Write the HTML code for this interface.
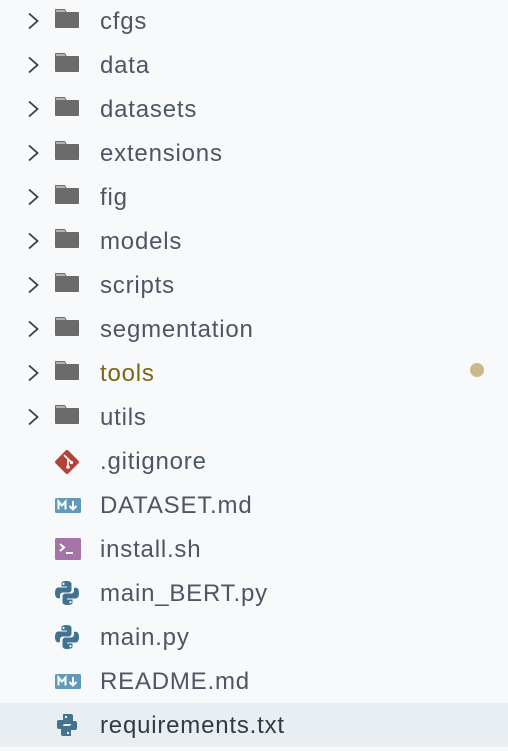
<!DOCTYPE html>
<html><head><meta charset="utf-8"><style>
html,body{margin:0;padding:0;width:508px;height:751px;background:#f8f9fb;overflow:hidden;font-family:"Liberation Sans",sans-serif;}
.row{position:absolute;left:0;width:508px;height:44px;}
.row .t{position:absolute;left:100px;top:1px;line-height:44px;font-size:24px;letter-spacing:0.8px;color:#4d5664;white-space:nowrap;}
.row svg{position:absolute;}
.sel{background:#e9eef3;}
</style></head><body>
<div id="c"></div>
<script>
var folders=["cfgs","data","datasets","extensions","fig","models","scripts","segmentation","tools","utils"];
var files=[[".gitignore","git"],["DATASET.md","md"],["install.sh","sh"],["main_BERT.py","py"],["main.py","py"],["README.md","md"],["requirements.txt","req"]];
var h="";
var chev='<svg style="left:27px;top:13px" width="13" height="18" viewBox="0 0 13 18"><path d="M2 1.5 L10.5 9 L2 16.5" fill="none" stroke="#3a3f47" stroke-width="1.8"/></svg>';
var fold='<svg style="left:55px;top:10px" width="24" height="19" viewBox="0 0 24 19"><path d="M0 1 Q0 0 1 0 L10 0 L11.5 3 L23 3 Q24 3 24 4 L24 18 Q24 19 23 19 L1 19 Q0 19 0 18Z" fill="#6b6b6b"/><rect x="1" y="1" width="9" height="2" fill="#b5b5b5"/></svg>';
var icons={
git:'<svg style="left:53px;top:9px" width="28" height="28" viewBox="0 0 28 28"><rect x="5" y="5" width="18" height="18" rx="2" transform="rotate(45 14 14)" fill="#b3433a"/><path d="M11 7 L15 11 L15 19 M15 11 L18 14" stroke="#fff" stroke-width="1.6" fill="none"/><circle cx="15" cy="19" r="1.8" fill="#fff"/><circle cx="18.5" cy="14.5" r="1.6" fill="#fff"/></svg>',
md:'<svg style="left:55px;top:15px" width="26" height="15" viewBox="0 0 26 15"><rect width="26" height="15" rx="1.5" fill="#5f9ab9"/><path d="M3.5 11.5 V3.5 L7 7.5 L10.5 3.5 V11.5" stroke="#fff" stroke-width="2" fill="none"/><path d="M18 3 V11 M14.5 8 L18 11.5 L21.5 8" stroke="#fff" stroke-width="2" fill="none"/></svg>',
sh:'<svg style="left:55px;top:11px" width="26" height="22" viewBox="0 0 26 22"><rect width="26" height="22" rx="1.5" fill="#a474a9"/><path d="M5 6 L9 9.5 L5 13" stroke="#fff" stroke-width="2" fill="none"/><path d="M11 15 H18" stroke="#fff" stroke-width="2"/></svg>',
py:'<svg style="left:55px;top:10px" width="24" height="24" viewBox="0 0 24 24"><path d="M11.5 0 C6 0 6.5 2.5 6.5 2.5 V5.5 H12 V6.5 H3.5 C3.5 6.5 0 6 0 12 C0 17.5 3 17.3 3 17.3 H5 V14.5 C5 14.5 5 11.5 8 11.5 H13.5 C13.5 11.5 16.5 11.5 16.5 8.5 V3 C16.5 3 17 0 11.5 0Z M8.5 1.8 A1.1 1.1 0 1 1 8.5 4 A1.1 1.1 0 1 1 8.5 1.8Z" fill="#3f7391" fill-rule="evenodd"/><path d="M12.5 24 C18 24 17.5 21.5 17.5 21.5 V18.5 H12 V17.5 H20.5 C20.5 17.5 24 18 24 12 C24 6.5 21 6.7 21 6.7 H19 V9.5 C19 9.5 19 12.5 16 12.5 H10.5 C10.5 12.5 7.5 12.5 7.5 15.5 V21 C7.5 21 7 24 12.5 24Z M15.5 22.2 A1.1 1.1 0 1 1 15.5 20 A1.1 1.1 0 1 1 15.5 22.2Z" fill="#3f7391" fill-rule="evenodd"/></svg>',
req:'<svg style="left:55px;top:10px" width="24" height="24" viewBox="0 0 24 24"><path d="M8 1 H16 Q18 1 18 3 V9 Q18 11 16 11 H10 Q8 11 8 13 V16 H4 Q2 16 2 14 V9 Q2 7 4 7 H8Z" fill="#44728f"/><path d="M16 23 H8 Q6 23 6 21 V15 Q6 13 8 13 H14 Q16 13 16 11 V8 H20 Q22 8 22 10 V15 Q22 17 20 17 H16Z" fill="#44728f"/><circle cx="11" cy="4" r="1.2" fill="#e9eef3"/><circle cx="13" cy="20" r="1.2" fill="#e9eef3"/></svg>'
};
folders.forEach(function(f,i){
 var col=f=="tools"?' style="color:#7d6614"':'';
 h+='<div class="row" style="top:'+(i*44-1)+'px">'+chev+fold+'<div class="t"'+col+'>'+f+'</div></div>';
});
files.forEach(function(f,j){
 var i=folders.length+j, top=i*44-1;
 var sel=f[1]=="req";
 h+='<div class="row'+(sel?' sel':'')+'" style="top:'+top+'px">'+icons[f[1]]+'<div class="t"'+(sel?' style="color:#333a44"':'')+'>'+f[0]+'</div></div>';
});
h+='<div style="position:absolute;left:470px;top:363px;width:14px;height:14px;border-radius:50%;background:#c9b98d"></div>';
document.getElementById("c").innerHTML=h;
</script>
</body></html>
